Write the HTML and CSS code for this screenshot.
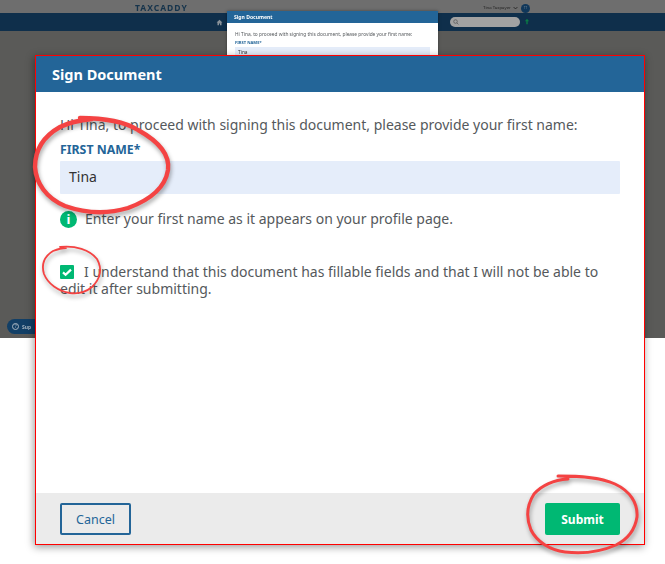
FILE: index.html
```html
<!DOCTYPE html>
<html lang="en">
<head>
<meta charset="utf-8">
<title>Sign Document</title>
<link rel="stylesheet" href="styles.css">
</head>
<body>
<div class="canvas">
  <div class="backdrop">
    <div class="topbar">
      <span class="logo">TA<span class="logo-x">X</span>CADDY</span>
      <span class="user">Tina Taxpayer</span>
      <svg class="chev" viewBox="0 0 8 6"><path d="M1 1.5l3 3 3-3" fill="none" stroke="#222" stroke-width="1.4"/></svg>
      <span class="avatar">TT</span>
    </div>
    <div class="navbar">
      <svg class="home" viewBox="0 0 10 10"><path d="M5 1L.8 5h1.3v4h2.2V6.4h1.4V9h2.2V5h1.3z" fill="#8a9299"/></svg>
      <div class="search">
        <svg class="search-icon" viewBox="0 0 10 10"><circle cx="4.2" cy="4.2" r="3" fill="none" stroke="#555" stroke-width="1.2"/><path d="M6.5 6.5L9 9" stroke="#555" stroke-width="1.2"/></svg>
      </div>
      <svg class="upload" viewBox="0 0 8 10"><path d="M4 1L1 4.5h2V9h2V4.5h2z" fill="#0a7a45"/></svg>
    </div>
    <div class="support"><span class="support-dot">?</span><span class="support-text">Sup</span></div>
  </div>

  <div class="mini">
    <div class="mini-head">Sign Document</div>
    <div class="mini-body">
      <p class="mini-intro">Hi Tina, to proceed with signing this document, please provide your first name:</p>
      <div class="mini-label">FIRST NAME*</div>
      <div class="mini-input">Tina</div>
    </div>
  </div>

  <div class="modal">
    <div class="modal-head">Sign Document</div>
    <div class="modal-body">
      <p class="intro">Hi Tina, to proceed with signing this document, please provide your first name:</p>
      <div class="label">FIRST NAME*</div>
      <div class="input">Tina</div>
      <div class="hint">
        <span class="info">i</span>
        <span>Enter your first name as it appears on your profile page.</span>
      </div>
      <p class="agree"><span class="check"><svg viewBox="0 0 14 14"><path d="M3 7.4l2.6 2.4L11 4.6" fill="none" stroke="#fff" stroke-width="2.2"/></svg></span>I understand that this document has fillable fields and that I will not be able to edit it after submitting.</p>
    </div>
    <div class="modal-foot">
      <button class="btn btn-cancel">Cancel</button>
      <button class="btn btn-submit">Submit</button>
    </div>
  </div>

  <svg class="scribbles" viewBox="0 0 665 564">
    <g fill="none" stroke="#f44343" stroke-linecap="round" stroke-linejoin="round">
      <path stroke-width="4.4" d="M80 118C105 118 125 122 138 130 158 141 170 155 168 170 165 188 150 200 128 208 108 214 85 213 65 206 46 198 36 183 35 167 35 150 44 136 60 127 70 122 82 120 92 119"/>
      <path stroke-width="1.8" d="M60 247C75 245 90 250 97 259 102 268 101 278 92 287 86 292 78 294 70 293 58 291 48 284 44 274 41 264 45 256 53 251 58 249 62 248 66 248"/>
      <path stroke-width="3" d="M558 476C580 476 600 477 615 484 630 491 638 503 637 517 635 530 628 539 616 545 600 552 582 554 565 552 550 550 537 542 531 530 526 518 527 505 534 494 543 484 555 480 568 479"/>
    </g>
  </svg>
</div>
</body>
</html>
```
FILE: styles.css
```css
* { box-sizing: border-box; }
html, body { margin: 0; padding: 0; background: #fff; }
body { font-family: "Noto Sans", "Liberation Sans", sans-serif; }
.canvas { position: relative; width: 665px; height: 564px; overflow: hidden; }

.backdrop { height: 338px; background: #5a5a58; position: relative; filter: blur(.35px); }
.topbar { height: 13px; background: #6e6e6e; position: relative; }
.logo { position: absolute; left: 135px; top: 2px; font-size: 8.5px; font-weight: 700; letter-spacing: 1px; color: #16344c; line-height: 11px; }
.logo-x { color: #16344c; }
.user { position: absolute; left: 483px; top: 3px; font-size: 4.3px; line-height: 9px; color: #222; white-space: nowrap; }
.chev { position: absolute; left: 513px; top: 6px; width: 5px; height: 4px; }
.avatar { position: absolute; left: 521px; top: 4px; width: 9px; height: 9px; border-radius: 50%; background: #10375a; color: #7d8b99; font-size: 3px; line-height: 9px; text-align: center; }
.navbar { height: 18px; background: #0f2f4b; position: relative; }
.home { position: absolute; left: 216px; top: 6px; width: 7px; height: 7px; }
.search { position: absolute; left: 450px; top: 4px; width: 70px; height: 10px; border-radius: 5px; background: #a2a2a2; }
.search-icon { position: absolute; left: 3px; top: 2px; width: 6px; height: 6px; }
.upload { position: absolute; left: 524px; top: 5px; width: 6px; height: 7px; }

.support { position: absolute; left: 7px; top: 319px; width: 40px; height: 15px; border-radius: 8px; background: #123f66; display: flex; align-items: center; padding-left: 5px; gap: 3px; }
.support-dot { width: 7px; height: 7px; border: 1px solid #a9b6c2; border-radius: 50%; color: #a9b6c2; font-size: 5px; line-height: 5px; text-align: center; }
.support-text { color: #a9b6c2; font-size: 5px; font-weight: 700; }

.mini { position: absolute; left: 227px; top: 11px; width: 211px; height: 60px; background: #fff; box-shadow: 0 0 3px rgba(0,0,0,.4); filter: blur(.35px); }
.mini-head { height: 12px; background: #236598; color: #fff; font-size: 5.1px; font-weight: 700; line-height: 12px; padding-left: 7px; }
.mini-body { padding: 7px 8px 0; }
.mini-intro { margin: 0; font-size: 4.8px; line-height: 8px; color: #55595c; white-space: nowrap; }
.mini-label { font-size: 4.1px; font-weight: 700; color: #236598; line-height: 8px; margin-top: 1px; }
.mini-input { height: 11px; background: #e5edfa; font-size: 4.8px; line-height: 11px; padding-left: 3px; color: #333; }

.modal { position: absolute; left: 35px; top: 55px; width: 610px; height: 490px; background: #fff; border: 1px solid #f00; box-shadow: -1px 2px 8px rgba(0,0,0,.4); display: flex; flex-direction: column; }
.modal-head { height: 36px; background: #236598; color: #fff; font-size: 14.5px; font-weight: 700; line-height: 36px; padding-left: 16px; flex: none; }
.modal-body { flex: 1; padding: 21px 24px 0; color: #55595c; font-size: 14px; }
.intro { margin: 0; line-height: 24px; white-space: nowrap; }
.label { margin-top: 3px; font-size: 12.3px; font-weight: 700; color: #236598; line-height: 20px; }
.input { margin-top: 1px; height: 33px; background: #e5edfa; color: #333; line-height: 31px; padding-left: 9px; border-radius: 1px; font-size: 14px; }
.hint { display: flex; align-items: center; gap: 8px; margin-top: 15px; line-height: 20px; }
.info { width: 17px; height: 17px; border-radius: 50%; background: #00b873; color: #fff; font-size: 13px; font-weight: 700; line-height: 17px; text-align: center; flex: none; }
.agree { margin: 34px 0 0; line-height: 17px; }
.check { display: inline-block; width: 14px; height: 14px; background: #00b873; border-radius: 1px; vertical-align: -2px; margin-right: 10px; }
.check svg { display: block; width: 14px; height: 14px; }

.modal-foot { flex: none; height: 51px; background: #ebebeb; display: flex; justify-content: space-between; align-items: flex-start; padding: 10px 24px 0; }
.btn { height: 32px; font-family: inherit; font-size: 12.5px; border-radius: 2px; padding: 0; }
.btn-cancel { width: 71px; background: transparent; border: 2px solid #236598; color: #236598; }
.btn-submit { width: 75px; background: #00b873; border: 0; color: #fff; font-weight: 700; font-size: 12px; }

.scribbles { position: absolute; left: 0; top: 0; width: 665px; height: 564px; pointer-events: none; filter: drop-shadow(1px 3px 2px rgba(0,0,0,.35)); }
```
